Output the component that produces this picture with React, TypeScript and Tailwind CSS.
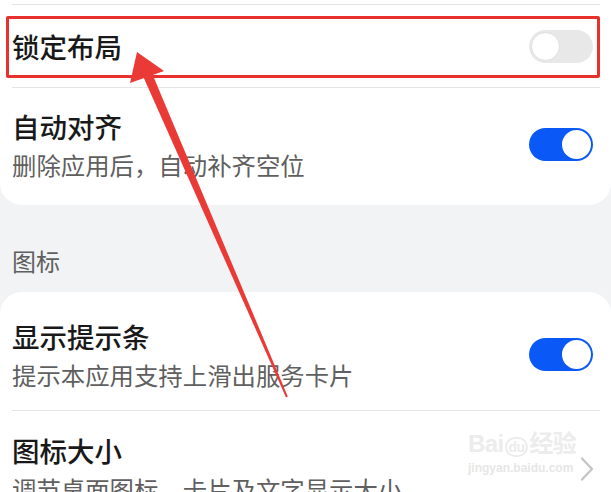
const FONT = '"Noto Sans CJK SC", "Noto Sans", sans-serif';

function Toggle({ on }: { on: boolean }) {
  return (
    <div
      className={`w-[64px] h-[33px] rounded-full flex items-center px-[2px] shrink-0 ${
        on ? 'bg-[#0a59f7] justify-end' : 'bg-[#e8e8e8] justify-start'
      }`}
    >
      <div
        className={`w-[29px] h-[29px] rounded-full bg-white ${
          on ? '' : 'border border-[#dedede]'
        }`}
      />
    </div>
  );
}

function Divider() {
  return <div className="h-px bg-[#e4e4e4]" />;
}

function SettingRow({
  title,
  sub,
  on,
  chevron,
  className,
}: {
  title: string;
  sub: string;
  on?: boolean;
  chevron?: boolean;
  className: string;
}) {
  return (
    <div className={`flex items-center justify-between ${className}`}>
      <div className="flex flex-col">
        <span className="text-[27.5px] leading-[36px] font-medium text-[#191919] whitespace-nowrap">{title}</span>
        <span className="mt-[5px] text-[24.4px] leading-[32px] text-[#5f5f5f] whitespace-nowrap">{sub}</span>
      </div>
      {chevron ? (
        <svg width="14" height="24" viewBox="0 0 14 24" className="mr-[6px] shrink-0">
          <path d="M2 1.5 L12 12 L2 22.5" fill="none" stroke="#c4c4c4" strokeWidth="2.2" strokeLinecap="round" strokeLinejoin="round" />
        </svg>
      ) : (
        <div className="mr-[7px]">
          <Toggle on={!!on} />
        </div>
      )}
    </div>
  );
}

export default function App() {
  return (
    <div
      className="relative w-[611px] h-[492px] overflow-hidden bg-[#f1f3f5]"
      style={{ fontFamily: FONT }}
    >
      {/* Card 1 */}
      <div className="bg-white rounded-b-[22px] pl-3 pr-[11px]">
        <div className="h-[4px]" />
        <Divider />
        <div className="h-[82px] flex items-center justify-between">
          <span className="text-[27.5px] leading-[36px] font-medium text-[#191919]">锁定布局</span>
          <div className="mr-[7px]">
            <Toggle on={false} />
          </div>
        </div>
        <Divider />
        <SettingRow title="自动对齐" sub="删除应用后，自动补齐空位" on className="pt-[20px] pb-[24px]" />
      </div>

      {/* Section header */}
      <div className="h-[87px] flex items-end pl-3 pb-[19px]">
        <span className="text-[24px] leading-[24px] text-[#5f5f5f]">图标</span>
      </div>

      {/* Card 2 */}
      <div className="bg-white rounded-t-[22px] pl-3 pr-[11px]">
        <SettingRow title="显示提示条" sub="提示本应用支持上滑出服务卡片" on className="pt-[26px] pb-[19px]" />
        <Divider />
        <SettingRow title="图标大小" sub="调节桌面图标，卡片及文字显示大小" chevron className="pt-[21px] pb-[20px]" />
      </div>

      {/* Watermark */}
      <div className="absolute left-[468px] top-[430px] flex flex-col items-start pointer-events-none select-none">
        <span className="text-[24px] leading-[28px] font-bold text-[#ececec] tracking-tight" style={{ fontFamily: '"Liberation Sans", "Noto Sans CJK SC", sans-serif' }}>
          Bai<span className="text-[14px] border-2 border-[#ececec] rounded-full px-[2px] mx-[1px]">du</span>经验
        </span>
        <span className="text-[12px] leading-[14px] text-[#e6e6e6] font-bold" style={{ fontFamily: '"Liberation Sans", sans-serif' }}>
          jingyan.baidu.com
        </span>
      </div>

      {/* Highlight box */}
      <div className="absolute left-[6px] top-[16px] w-[594px] h-[62px] border-[3px] border-[#e8302c] rounded-[2px] pointer-events-none" />

      {/* Arrow */}
      <svg className="absolute left-0 top-0 pointer-events-none" width="611" height="492" viewBox="0 0 611 492">
        <polygon points="137,52 164,71 130,83" fill="#ea3a36" />
        <polygon points="142.5,75 151.5,72 287.8,396.6 286,397.4" fill="#ea3a36" />
      </svg>
    </div>
  );
}
